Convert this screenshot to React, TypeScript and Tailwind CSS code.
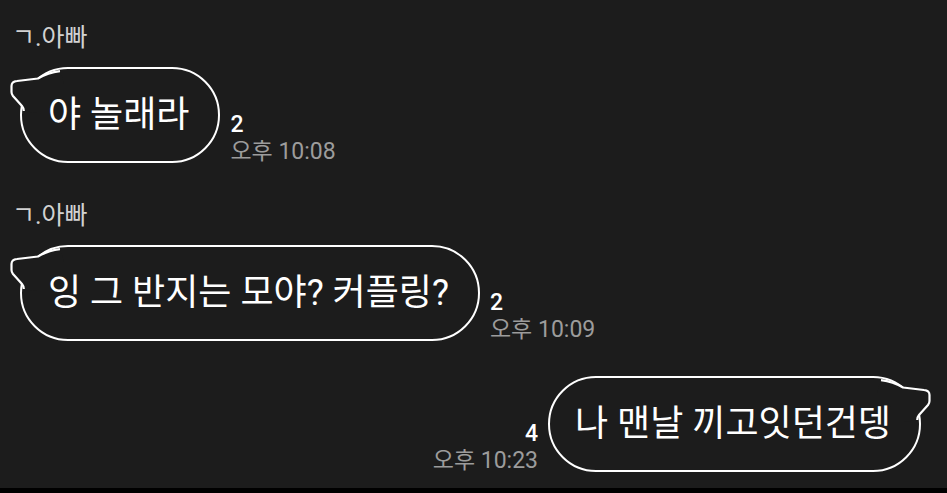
const font = { fontFamily: 'Roboto, "Noto Sans CJK KR", sans-serif' };

function Tail({ side }: { side: 'left' | 'right' }) {
  const pos = side === 'left' ? 'left-[-14px]' : 'right-[-14px] -scale-x-100';
  return (
    <svg
      className={`absolute top-[-2px] ${pos} overflow-visible`}
      width="56"
      height="48"
      viewBox="-14 -2 56 48"
    >
      <path
        d="M38 2.2 C28 3.5 22 6 16 9.5 L-5 12 Q-10.5 12.5 -10.5 17 L-10.5 23 Q-10.5 25 -9 27 L0 37 Q1.7 39 1.8 42 L14 44 L42 14 Z"
        fill="#1c1c1c"
      />
      <path
        d="M38 2.2 C28 3.5 22 6 16 9.5 L-5 12 Q-10.5 12.5 -10.5 17 L-10.5 23 Q-10.5 25 -9 27 L0 37 Q1.7 39 1.8 42"
        fill="none"
        stroke="#ffffff"
        strokeWidth="2.2"
        strokeLinejoin="round"
      />
    </svg>
  );
}

function Bubble({ text, side }: { text: string; side: 'left' | 'right' }) {
  return (
    <div
      className={`relative h-[96px] rounded-full border-2 border-white flex items-center text-[36px] text-white whitespace-nowrap ${
        side === 'left' ? 'pl-[26px] pr-[29px]' : 'pl-[25px] pr-[28px]'
      }`}
    >
      <Tail side={side} />
      <span className="relative">{text}</span>
    </div>
  );
}

function Meta({ count, time, align }: { count: string; time: string; align: 'left' | 'right' }) {
  return (
    <div className={`flex flex-col mb-[-3px] ${align === 'left' ? 'items-start ml-[10px]' : 'items-end mr-[10px]'}`}>
      <span className="text-[23px] leading-[26px] font-medium text-white">{count}</span>
      <span className="text-[23px] leading-[28px] text-[#9c9c9c]">{time}</span>
    </div>
  );
}

function Name() {
  return <div className="pl-[12px] h-[32px] text-[25px] leading-[32px] text-[#d2d2d2]">ㄱ.아빠</div>;
}

export default function App() {
  return (
    <div className="w-[947px] h-[493px] flex flex-col bg-black" style={font}>
      <div className="flex-1 bg-[#1c1c1c] flex flex-col pt-[22px]">
        <Name />
        <div className="flex items-end mt-[13px] pl-[20px]">
          <Bubble side="left" text="야 놀래라" />
          <Meta align="left" count="2" time="오후 10:08" />
        </div>

        <div className="mt-[37px]">
          <Name />
        </div>
        <div className="flex items-end mt-[13px] pl-[20px]">
          <Bubble side="left" text="잉 그 반지는 모야? 커플링?" />
          <Meta align="left" count="2" time="오후 10:09" />
        </div>

        <div className="flex items-end justify-end mt-[35px] pr-[26px]">
          <Meta align="right" count="4" time="오후 10:23" />
          <Bubble side="right" text="나 맨날 끼고잇던건뎅" />
        </div>
      </div>
      <div className="h-[5px] bg-black" />
    </div>
  );
}
